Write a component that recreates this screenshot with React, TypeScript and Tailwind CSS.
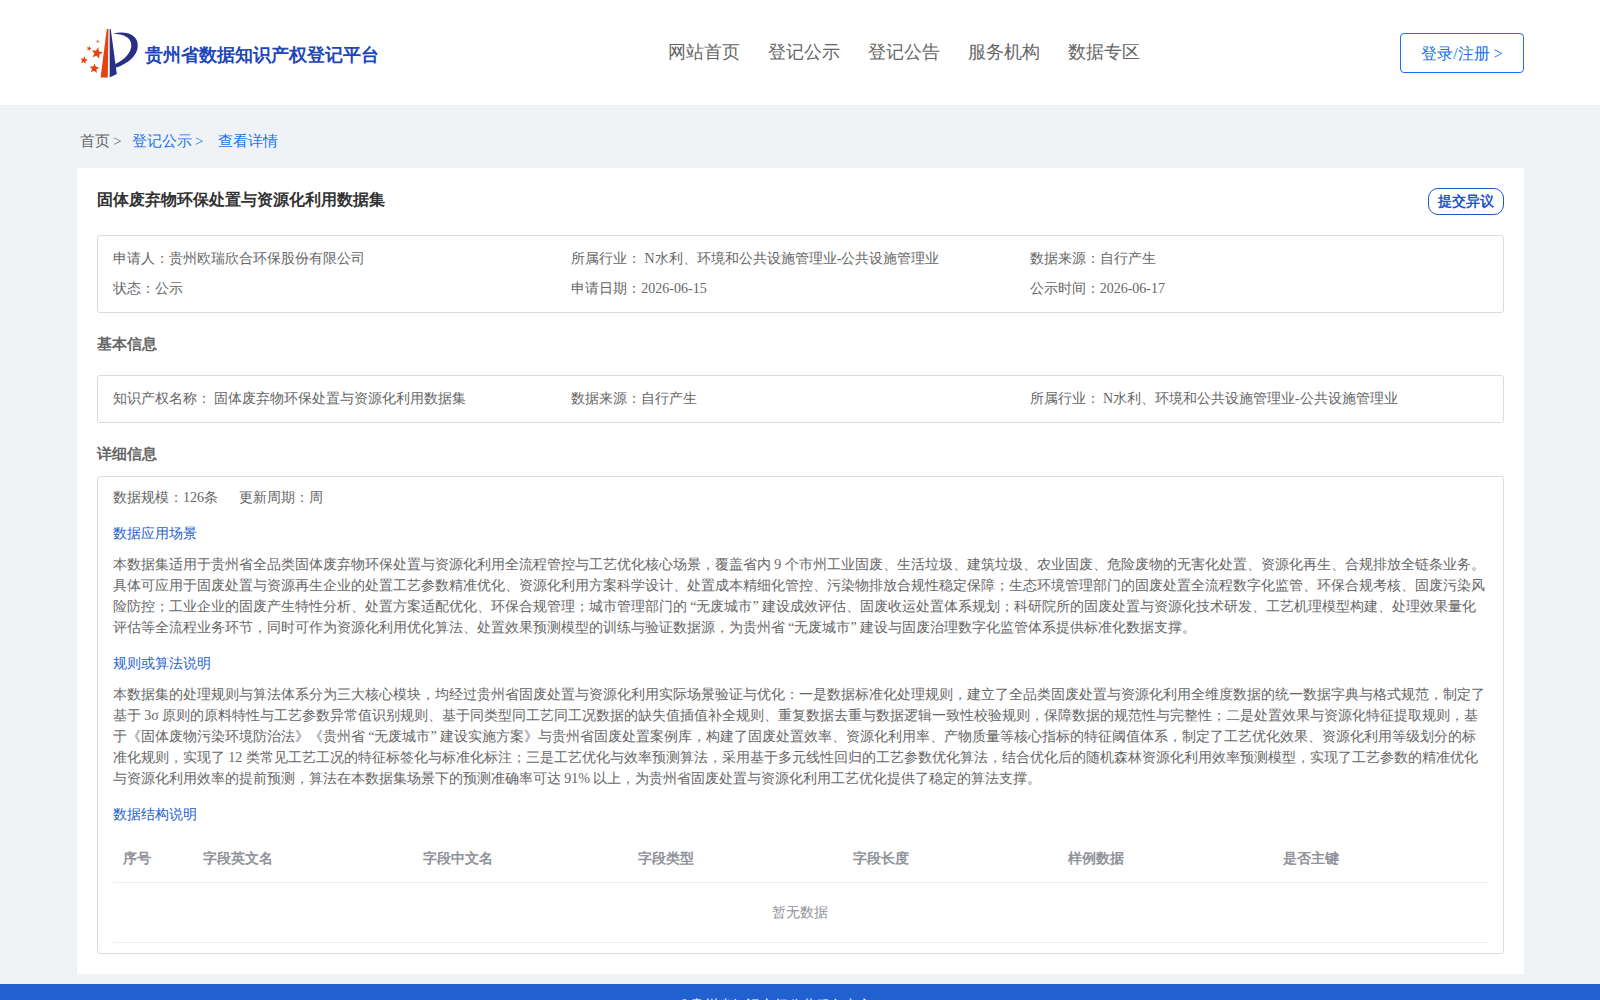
import type { ReactNode } from 'react';

interface Field {
  label: string;
  value: string;
}

const navItems = ['网站首页', '登记公示', '登记公告', '服务机构', '数据专区'];

const summary: Field[] = [
  { label: '申请人：', value: '贵州欧瑞欣合环保股份有限公司' },
  { label: '所属行业：', value: ' N水利、环境和公共设施管理业-公共设施管理业' },
  { label: '数据来源：', value: '自行产生' },
  { label: '状态：', value: '公示' },
  { label: '申请日期：', value: '2026-06-15' },
  { label: '公示时间：', value: '2026-06-17' },
];

const basicInfo: Field[] = [
  { label: '知识产权名称：', value: ' 固体废弃物环保处置与资源化利用数据集' },
  { label: '数据来源：', value: '自行产生' },
  { label: '所属行业：', value: ' N水利、环境和公共设施管理业-公共设施管理业' },
];

const columns = [
  { title: '序号', width: 'w-[80px]' },
  { title: '字段英文名', width: 'w-[220px]' },
  { title: '字段中文名', width: 'w-[215px]' },
  { title: '字段类型', width: 'w-[215px]' },
  { title: '字段长度', width: 'w-[215px]' },
  { title: '样例数据', width: 'w-[215px]' },
  { title: '是否主键', width: 'w-[215px]' },
];

const stars = [
  { x: 17, y: 25.2, r: 6, rotate: 12 },
  { x: 14.3, y: 40.5, r: 5.1, rotate: 6 },
  { x: 3.9, y: 32.3, r: 4, rotate: 10 },
  { x: 9, y: 20.5, r: 2.6, rotate: 20 },
  { x: 17.7, y: 13.5, r: 1.6, rotate: 10 },
];

const scene =
  '本数据集适用于贵州省全品类固体废弃物环保处置与资源化利用全流程管控与工艺优化核心场景，覆盖省内 9 个市州工业固废、生活垃圾、建筑垃圾、农业固废、危险废物的无害化处置、资源化再生、合规排放全链条业务。具体可应用于固废处置与资源再生企业的处置工艺参数精准优化、资源化利用方案科学设计、处置成本精细化管控、污染物排放合规性稳定保障；生态环境管理部门的固废处置全流程数字化监管、环保合规考核、固废污染风险防控；工业企业的固废产生特性分析、处置方案适配优化、环保合规管理；城市管理部门的 “无废城市” 建设成效评估、固废收运处置体系规划；科研院所的固废处置与资源化技术研发、工艺机理模型构建、处理效果量化评估等全流程业务环节，同时可作为资源化利用优化算法、处置效果预测模型的训练与验证数据源，为贵州省 “无废城市” 建设与固废治理数字化监管体系提供标准化数据支撑。';

const rule =
  '本数据集的处理规则与算法体系分为三大核心模块，均经过贵州省固废处置与资源化利用实际场景验证与优化：一是数据标准化处理规则，建立了全品类固废处置与资源化利用全维度数据的统一数据字典与格式规范，制定了基于 3σ 原则的原料特性与工艺参数异常值识别规则、基于同类型同工艺同工况数据的缺失值插值补全规则、重复数据去重与数据逻辑一致性校验规则，保障数据的规范性与完整性；二是处置效果与资源化特征提取规则，基于《固体废物污染环境防治法》《贵州省 “无废城市” 建设实施方案》与贵州省固废处置案例库，构建了固废处置效率、资源化利用率、产物质量等核心指标的特征阈值体系，制定了工艺优化效果、资源化利用等级划分的标准化规则，实现了 12 类常见工艺工况的特征标签化与标准化标注；三是工艺优化与效率预测算法，采用基于多元线性回归的工艺参数优化算法，结合优化后的随机森林资源化利用效率预测模型，实现了工艺参数的精准优化与资源化利用效率的提前预测，算法在本数据集场景下的预测准确率可达 91% 以上，为贵州省固废处置与资源化利用工艺优化提供了稳定的算法支撑。';

const Logo = () => (
  <svg width="58" height="50" viewBox="0 0 58 50">
    <path d="M26.800 1h1.700L27.800 49.500H20.600z" fill="#e8430f" />
    <path d="M29.700 1h1L36.800 46 29.700 49.500z" fill="#2a2f86" />
    <path d="M33 5.700C45 2.500 57.800 6 57.800 17.500c0 10-10 18.500-22.300 22.300L35 36.300C44 32 51.500 25 51.300 17 51.200 9 43 5.800 33 5.700z" fill="#2a2f86" />
    {stars.map((s) => (
      <polygon
        key={s.y}
        points="0,-1 .26,-.36 .95,-.31 .42,.14 .59,.81 0,.44 -.59,.81 -.42,.14 -.95,-.31 -.26,-.36"
        transform={`translate(${s.x} ${s.y}) rotate(${s.rotate}) scale(${s.r})`}
        fill="#e8430f"
      />
    ))}
  </svg>
);

const FieldBox = ({ fields }: { fields: Field[] }) => (
  <div className="grid grid-cols-3 rounded-[3px] border border-[#dcdcdc] px-[15px] py-2">
    {fields.map((field) => (
      <div key={field.label} className="h-[30px] leading-[30px]">
        {field.label}
        {field.value}
      </div>
    ))}
  </div>
);

const SubTitle = ({ children }: { children: ReactNode }) => (
  <h4 className="leading-[21px] text-[#1f5fcf]">{children}</h4>
);

export default function App() {
  return (
    <div className="h-[1000px] overflow-hidden bg-[#eff3f6] font-['Liberation_Serif',serif] text-sm text-[#666] [word-spacing:-0.25px]">
      <header className="flex h-[105px] items-center bg-white pr-[76px] pl-[80px]">
        <div className="flex w-[588px] items-center gap-[7px]">
          <Logo />
          <span className="pt-[6px] text-[18px] font-bold text-[#2146b8]">贵州省数据知识产权登记平台</span>
        </div>
        <nav className="flex gap-7 text-[18px]">
          {navItems.map((item) => (
            <a key={item}>{item}</a>
          ))}
        </nav>
        <button className="ml-auto h-10 w-[124px] rounded border border-[#1a6ff0] pt-[2px] text-base text-[#1a6ff0]">
          登录/注册 &gt;
        </button>
      </header>

      <div className="flex h-[63px] items-center pt-[11px] pl-[80px] text-[15px] [word-spacing:-0.5px]">
        <span className="mr-[10px]">首页 &gt;</span>
        <span className="mr-[15px] text-[#1a72f2]">登记公示 &gt;</span>
        <span className="text-[#1a72f2]">查看详情</span>
      </div>

      <main className="mr-[76px] ml-[77px] h-[806px] bg-white px-5 pt-5">
        <div className="flex h-[47px] items-start justify-between">
          <h1 className="text-base leading-6 font-bold text-[#333]">固体废弃物环保处置与资源化利用数据集</h1>
          <button className="h-[27px] w-[76px] rounded-[10px] border border-[#1f57c3] font-bold text-[#1f57c3]">提交异议</button>
        </div>

        <FieldBox fields={summary} />

        <h3 className="h-[62px] pt-5 text-[15px] leading-[22px] font-bold">基本信息</h3>
        <FieldBox fields={basicInfo} />

        <h3 className="h-[53px] pt-5 text-[15px] leading-[22px] font-bold">详细信息</h3>
        <section className="h-[478px] rounded-[3px] border border-[#dcdcdc] px-[15px] pt-[10px]">
          <div className="flex gap-[21px] leading-[21px]">
            <span>数据规模：126条</span>
            <span>更新周期：周</span>
          </div>
          <div className="mt-[15px]">
            <SubTitle>数据应用场景</SubTitle>
            <p className="mt-[10px] leading-[21px]">{scene}</p>
          </div>
          <div className="mt-[15px]">
            <SubTitle>规则或算法说明</SubTitle>
            <p className="mt-[10px] leading-[21px]">{rule}</p>
          </div>
          <div className="mt-[15px]">
            <SubTitle>数据结构说明</SubTitle>
            <table className="mt-[10px] w-full table-fixed border-separate border-spacing-0 text-[#909399]">
              <thead>
                <tr>
                  {columns.map((col) => (
                    <th
                      key={col.title}
                      className={`${col.width} h-12 border-b border-[#ebeef5] px-[10px] text-left font-bold`}
                    >
                      {col.title}
                    </th>
                  ))}
                </tr>
              </thead>
              <tbody>
                <tr>
                  <td colSpan={columns.length} className="h-[60px] border-b border-[#ebeef5] pr-[2px] text-center">
                    暂无数据
                  </td>
                </tr>
              </tbody>
            </table>
          </div>
        </section>
      </main>

      <footer className="mt-[10px] h-4 bg-[#2160cf] pt-[11px] pl-[679px] leading-[21px] text-white">
        ©贵州省知识产权公共服务中心
      </footer>
    </div>
  );
}
